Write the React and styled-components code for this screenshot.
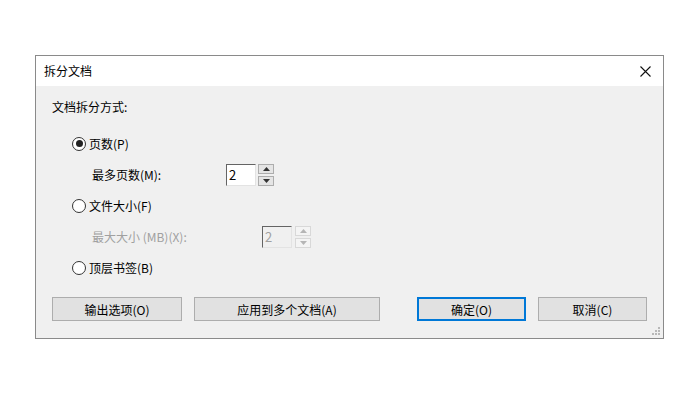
import React from 'react';
import styled, { createGlobalStyle } from 'styled-components';

const Global = createGlobalStyle`
  html, body {
    margin: 0;
    padding: 0;
    background: #ffffff;
  }
  body {
    font-family: "Noto Sans CJK SC", "Noto Sans", sans-serif;
    font-size: 12px;
    color: #000;
  }
`;

const Page = styled.div`
  width: 700px;
  height: 395px;
  padding: 55px 0 0 35px;
  box-sizing: border-box;
`;

const Dialog = styled.div`
  width: 629px;
  height: 284px;
  box-sizing: border-box;
  border: 1px solid #8a8a8a;
  background: #f0f0f0;
  display: flex;
  flex-direction: column;
  position: relative;
`;

const TitleBar = styled.div`
  height: 30px;
  background: #ffffff;
  display: flex;
  align-items: center;
  justify-content: space-between;
  padding: 0 8px 0 8px;
  flex-shrink: 0;
`;

const Title = styled.span`
  font-size: 12px;
  line-height: 1;
`;

const Close = styled.div`
  width: 20px;
  height: 20px;
  display: flex;
  align-items: center;
  justify-content: center;
`;

const Body = styled.div`
  padding: 11px 16px 0 16px;
  display: flex;
  flex-direction: column;
`;

const Heading = styled.div`
  height: 20px;
  line-height: 20px;
`;

const Options = styled.div`
  margin-top: 11px;
  display: flex;
  flex-direction: column;
`;

const Row = styled.div`
  height: 31px;
  display: flex;
  align-items: center;
  padding-left: ${p => p.$indent}px;
  color: ${p => (p.$disabled ? '#a0a0a0' : '#000')};
`;

const RadioCircle = styled.span`
  width: 12px;
  height: 12px;
  border: 1px solid #333;
  border-radius: 50%;
  background: #fff;
  display: flex;
  align-items: center;
  justify-content: center;
  margin-right: 3px;
  &::after {
    content: '';
    width: 7px;
    height: 7px;
    border-radius: 50%;
    background: #222;
    display: ${p => (p.$checked ? 'block' : 'none')};
  }
`;

const FieldLabel = styled.span`
  width: ${p => p.$width}px;
  flex-shrink: 0;
`;

const SpinInput = styled.div`
  width: 30px;
  height: 22px;
  box-sizing: border-box;
  border-top: 1px solid #646464;
  border-left: 1px solid #646464;
  border-right: 1px solid #e3e3e3;
  border-bottom: 1px solid #e3e3e3;
  background: ${p => (p.$disabled ? '#f0f0f0' : '#ffffff')};
  color: ${p => (p.$disabled ? '#a0a0a0' : '#000')};
  padding-left: 2px;
  display: flex;
  align-items: center;
  font-size: 13px;
`;

const SpinButtons = styled.div`
  display: flex;
  flex-direction: column;
  gap: 2px;
  margin-left: ${p => p.$gap}px;
`;

const SpinButton = styled.div`
  width: 16px;
  height: 10px;
  box-sizing: border-box;
  border: 1px solid ${p => (p.$disabled ? '#d8d8d8' : '#adadad')};
  background: ${p => (p.$disabled ? '#f4f4f4' : '#e5e5e5')};
  display: flex;
  align-items: center;
  justify-content: center;
`;

const Footer = styled.div`
  margin-top: 14px;
  padding: 0 16px;
  display: flex;
  align-items: center;
`;

const Button = styled.div`
  width: ${p => p.$width}px;
  height: 24px;
  box-sizing: border-box;
  border: ${p => (p.$primary ? '2px solid #0078d7' : '1px solid #adadad')};
  background: #e1e1e1;
  display: flex;
  align-items: center;
  justify-content: center;
  margin-left: ${p => p.$gap || 0}px;
`;

const Grip = styled.svg`
  position: absolute;
  right: 2px;
  bottom: 2px;
`;

const Arrow = ({ up, disabled }) => (
  <svg width="7" height="4" viewBox="0 0 7 4">
    <path
      d={up ? 'M0 4 L3.5 0 L7 4 Z' : 'M0 0 L3.5 4 L7 0 Z'}
      fill={disabled ? '#b5b5b5' : '#333'}
    />
  </svg>
);

const Spin = ({ value, disabled, gap }) => (
  <>
    <SpinInput $disabled={disabled}>{value}</SpinInput>
    <SpinButtons $gap={gap}>
      <SpinButton $disabled={disabled}>
        <Arrow up disabled={disabled} />
      </SpinButton>
      <SpinButton $disabled={disabled}>
        <Arrow disabled={disabled} />
      </SpinButton>
    </SpinButtons>
  </>
);

export default function App() {
  return (
    <Page>
      <Global />
      <Dialog>
        <TitleBar>
          <Title>拆分文档</Title>
          <Close>
            <svg width="11" height="11" viewBox="0 0 11 11">
              <path d="M0.5 0.5 L10.5 10.5 M10.5 0.5 L0.5 10.5" stroke="#111" strokeWidth="1.1" />
            </svg>
          </Close>
        </TitleBar>
        <Body>
          <Heading>文档拆分方式:</Heading>
          <Options>
            <Row $indent={20}>
              <RadioCircle $checked />
              页数(P)
            </Row>
            <Row $indent={40}>
              <FieldLabel $width={134}>最多页数(M):</FieldLabel>
              <Spin value="2" gap={2} />
            </Row>
            <Row $indent={20}>
              <RadioCircle />
              文件大小(F)
            </Row>
            <Row $indent={40} $disabled>
              <FieldLabel $width={170}>最大大小 (MB)(X):</FieldLabel>
              <Spin value="2" disabled gap={3} />
            </Row>
            <Row $indent={20}>
              <RadioCircle />
              顶层书签(B)
            </Row>
          </Options>
        </Body>
        <Footer>
          <Button $width={130}>输出选项(O)</Button>
          <Button $width={186} $gap={12}>应用到多个文档(A)</Button>
          <Button $width={109} $gap={37} $primary>确定(O)</Button>
          <Button $width={109} $gap={12}>取消(C)</Button>
        </Footer>
        <Grip width="10" height="10" viewBox="0 0 10 10">
          <g fill="#b8b8b8">
            <rect x="7" y="1" width="2" height="2" />
            <rect x="4" y="4" width="2" height="2" />
            <rect x="7" y="4" width="2" height="2" />
            <rect x="1" y="7" width="2" height="2" />
            <rect x="4" y="7" width="2" height="2" />
            <rect x="7" y="7" width="2" height="2" />
          </g>
        </Grip>
      </Dialog>
    </Page>
  );
}
